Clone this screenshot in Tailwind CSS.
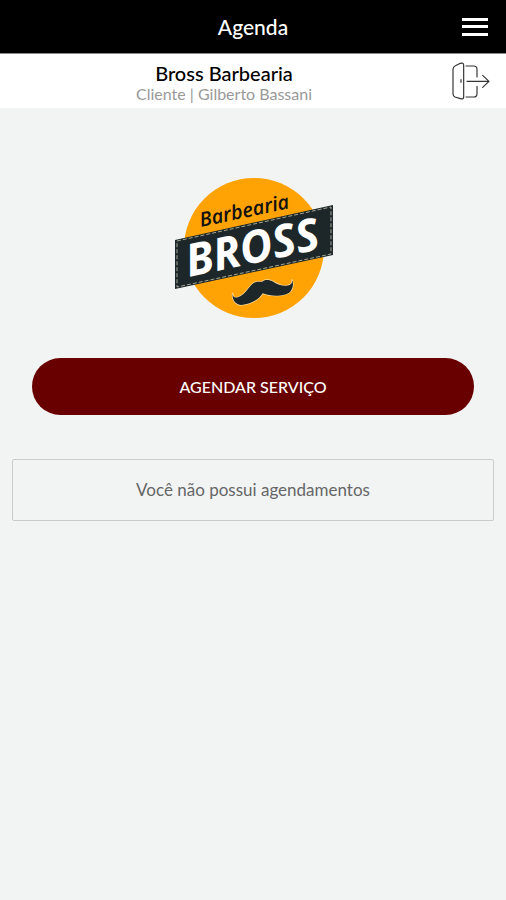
<!DOCTYPE html>
<html lang="pt-BR">
<head>
  <meta charset="UTF-8"/>
  <meta name="viewport" content="width=device-width, initial-scale=1.0"/>
  <title>Bross Barbearia - Agenda</title>
  <script src="https://cdn.jsdelivr.net/npm/@tailwindcss/browser@4"></script>
</head>
<body class="bg-[#f2f4f4] font-['Lato',sans-serif] min-h-screen">
  <header class="grid grid-cols-[1fr_auto_1fr] items-center h-[54px] px-[18px] bg-black border-b border-[#8a8a8a]">
    <h1 class="col-start-2 text-[21px] leading-7 font-medium text-white">Agenda</h1>
    <button type="button" aria-label="Menu" class="justify-self-end">
      <svg class="block w-[26px] h-[20px]" viewBox="0 0 26 20" fill="#fff">
        <rect x="0" y="1" width="26" height="3"/>
        <rect x="0" y="8" width="26" height="3"/>
        <rect x="0" y="16" width="26" height="3"/>
      </svg>
    </button>
  </header>

  <div class="flex items-center h-[54px] pr-4 bg-white">
    <div class="flex-1 pt-1 text-center">
      <p class="text-[20px] leading-[22px] font-medium text-black">Bross Barbearia</p>
      <p class="text-[16px] leading-5 text-[#999]">Cliente | Gilberto Bassani</p>
    </div>
    <a href="#" aria-label="Sair" class="ml-1">
      <svg class="block w-[38px] h-[38px]" viewBox="66 189 114 114" fill="none" stroke="#333" stroke-width="3.5" stroke-linecap="round" stroke-linejoin="round">
        <path d="M69 284V211Q69 203 76 200L91 193Q101 190 101 199V294Q101 302 91 299L75 294Q69 291 69 284Z"/>
        <path d="M108 201H131Q141 201 141 211V234M108 294H131Q141 294 141 284V262"/>
        <path d="M111 247H176M158 229L177 247L158 265"/>
        <path d="M93 242V250"/>
      </svg>
    </a>
  </div>

  <main class="px-3 pt-[70px]">
    <svg class="block mx-auto w-[160px] h-[140px]" viewBox="-2 0 160 140" role="img" aria-label="Barbearia Bross">
      <circle cx="79" cy="70" r="70" fill="#ffa305"/>
      <!-- banner with stitched edge -->
      <path d="M0 62L158 27V77L0 111Z" fill="#1d2729"/>
      <path d="M2 63L156 29V76L2 109Z" fill="none" stroke="#a5a795" stroke-width="1" stroke-dasharray="4 2"/>
      <text transform="translate(26 49) rotate(-12)" font-family="Open Sans" font-size="20" font-weight="600" font-style="italic" fill="#111">Barbearia</text>
      <text transform="translate(14 99) rotate(-12)" font-family="Open Sans" font-size="45" font-weight="700" font-style="italic" fill="#fff">BROSS</text>
      <g transform="translate(50 87) scale(.333)">
        <path d="M23 84C22 95 28 100 38 97C60 92 70 66 85 55C95 48 106 52 112 50C118 42 135 44 145 50C160 60 180 66 194 60C201 57 203 50 200 44C206 52 206 68 196 80C182 94 140 96 113 85C105 100 80 118 50 120C32 120 20 105 23 84Z" fill="#1d2729" stroke="#ffe3a8" stroke-width="4" paint-order="stroke"/>
      </g>
    </svg>

    <div class="mt-10 px-5">
      <button type="button" class="block w-full h-[57px] rounded-full bg-[#690000] text-[16px] font-medium text-white">AGENDAR SERVIÇO</button>
    </div>

    <p class="mt-11 py-[18px] border border-[#c8cbcb] rounded-xs text-center text-[17px] leading-6 text-[#666]">Você não possui agendamentos</p>
  </main>
</body>
</html>
